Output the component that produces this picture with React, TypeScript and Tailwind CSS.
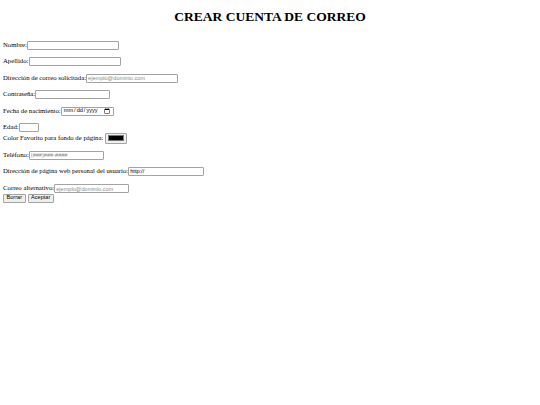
import React from 'react';

const labelFont = { fontFamily: '"Liberation Serif", "Times New Roman", serif' };

const fieldClass =
  'h-[9px] border border-[#a3a3a3] rounded-[1px] bg-white px-[1px] text-[5.6px] leading-none text-black placeholder:text-[#8a8a8a] font-["Liberation_Sans",Arial,sans-serif] outline-none';

const buttonClass =
  'h-[9px] px-[2.5px] border border-[#a3a3a3] rounded-[1px] bg-[#efefef] text-[5.6px] leading-none font-["Liberation_Sans",Arial,sans-serif]';

function Row({ children, className = '' }: { children: React.ReactNode; className?: string }) {
  return <div className={`flex items-center h-[10px] whitespace-nowrap ${className}`}>{children}</div>;
}

export default function App() {
  return (
    <div className="w-[540px] h-[405px] bg-white text-black text-[6.75px]" style={labelFont}>
      {/* Title */}
      <h1 className="pt-[9px] text-center text-[13.5px] font-bold leading-[15px]">CREAR CUENTA DE CORREO</h1>

      {/* Form */}
      <form className="px-[3px] mt-[16px] flex flex-col">
        <Row>
          <span>Nombre:</span>
          <input type="text" className={`${fieldClass} w-[92px]`} />
        </Row>
        <Row className="mt-[6.5px]">
          <span>Apellido:</span>
          <input type="text" className={`${fieldClass} w-[92px]`} />
        </Row>
        <Row className="mt-[6.5px]">
          <span>Dirección de correo solicitada:</span>
          <input type="email" placeholder="ejemplo@dominio.com" className={`${fieldClass} w-[92px]`} />
        </Row>
        <Row className="mt-[6.5px]">
          <span>Contraseña:</span>
          <input type="password" className={`${fieldClass} w-[75px]`} />
        </Row>
        <Row className="mt-[6.5px]">
          <span>Fecha de nacimiento:</span>
          <input type="date" className={`${fieldClass} w-[53px]`} />
        </Row>
        <Row className="mt-[6px]">
          <span>Edad:</span>
          <input type="text" className={`${fieldClass} w-[20px]`} />
        </Row>
        <div className="flex items-center h-[11px] whitespace-nowrap mt-[0.5px]">
          <span>Color Favorito para fondo de página:</span>
          <span className="ml-[2px] flex items-center justify-center w-[22px] h-[11px] border border-[#a3a3a3] rounded-[1px] bg-[#efefef]">
            <span className="w-[16px] h-[6px] bg-black border border-[#777]" />
          </span>
        </div>
        <Row className="mt-[6.5px]">
          <span>Teléfono:</span>
          <input type="tel" placeholder="(###)###-####" className={`${fieldClass} w-[75px]`} />
        </Row>
        <Row className="mt-[6px]">
          <span>Dirección de página web personal del usuario:</span>
          <input type="url" defaultValue="http://" className={`${fieldClass} w-[76px]`} />
        </Row>
        <Row className="mt-[7.5px]">
          <span>Correo alternativo:</span>
          <input type="email" placeholder="ejemplo@dominio.com" className={`${fieldClass} w-[75px]`} />
        </Row>
        <div className="flex gap-[2px]">
          <button type="reset" className={buttonClass}>
            Borrar
          </button>
          <button type="button" className={buttonClass}>
            Aceptar
          </button>
        </div>
      </form>
    </div>
  );
}
